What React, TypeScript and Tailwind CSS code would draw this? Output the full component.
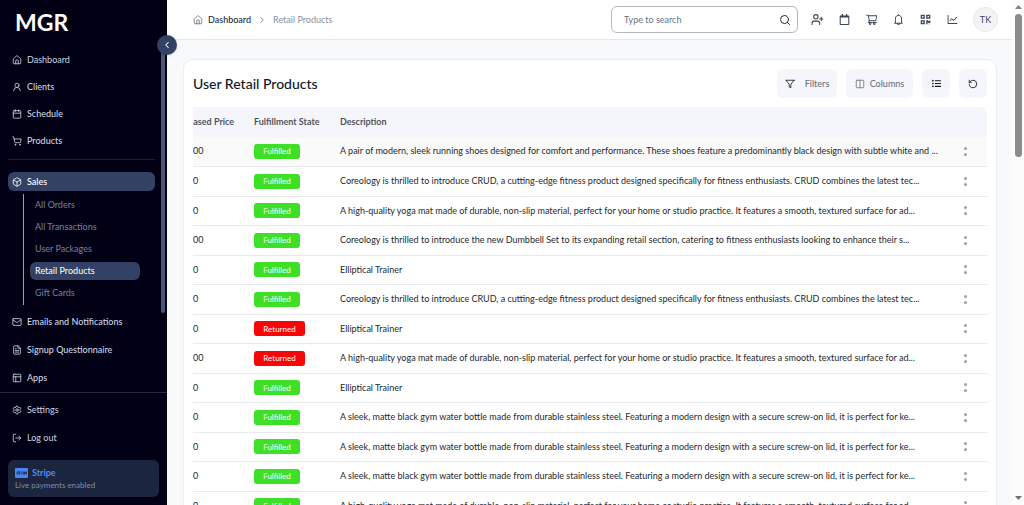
import React from "react";
import {
  Box, Calendar, ChevronLeft, ChevronRight, Columns2, FileText, House, LogOut, Mail,
  PanelsTopLeft, RotateCcw, Search, Settings, ShoppingCart, UserPlus, UserRound,
} from "lucide-react";
import { AiOutlineShoppingCart, AiOutlineBell, AiOutlineLineChart } from "react-icons/ai";
import { FaListUl, FaQrcode, FaRegCalendar } from "react-icons/fa";
import { FiFilter } from "react-icons/fi";

type Icon = React.ComponentType<{ size?: number; strokeWidth?: number; className?: string }>;

const mainLinks: { label: string; icon: Icon; strong: boolean }[] = [
  { label: "Dashboard", icon: House, strong: false },
  { label: "Clients", icon: UserRound, strong: true },
  { label: "Schedule", icon: Calendar, strong: true },
  { label: "Products", icon: ShoppingCart, strong: true },
];

const salesLinks = ["All Orders", "All Transactions", "User Packages", "Retail Products", "Gift Cards"];

const moreLinks: { label: string; icon: Icon; strong: boolean }[] = [
  { label: "Emails and Notifications", icon: Mail, strong: true },
  { label: "Signup Questionnaire", icon: FileText, strong: true },
  { label: "Apps", icon: PanelsTopLeft, strong: true },
];

const shoes = "A pair of modern, sleek running shoes designed for comfort and performance. These shoes feature a predominantly black design with subtle white and ...";
const crud = "Coreology is thrilled to introduce CRUD, a cutting-edge fitness product designed specifically for fitness enthusiasts. CRUD combines the latest tec...";
const yoga = "A high-quality yoga mat made of durable, non-slip material, perfect for your home or studio practice. It features a smooth, textured surface for ad...";
const dumbbell = "Coreology is thrilled to introduce the new Dumbbell Set to its expanding retail section, catering to fitness enthusiasts looking to enhance their s...";
const bottle = "A sleek, matte black gym water bottle made from durable stainless steel. Featuring a modern design with a secure screw-on lid, it is perfect for ke...";
const trainer = "Elliptical Trainer";

const rows: [string, "Fulfilled" | "Returned", string][] = [
  ["$120.00", "Fulfilled", shoes],
  ["$45.00", "Fulfilled", crud],
  ["$30.00", "Fulfilled", yoga],
  ["$150.00", "Fulfilled", dumbbell],
  ["$99.00", "Fulfilled", trainer],
  ["$45.00", "Fulfilled", crud],
  ["$99.00", "Returned", trainer],
  ["$130.00", "Returned", yoga],
  ["$99.00", "Fulfilled", trainer],
  ["$25.00", "Fulfilled", bottle],
  ["$25.00", "Fulfilled", bottle],
  ["$25.00", "Fulfilled", bottle],
  ["$30.00", "Fulfilled", yoga],
];

function NavLink({ label, icon: I, strong, tall }: { label: string; icon: Icon; strong: boolean; tall?: boolean }) {
  return (
    <a href="#" className={`flex items-center gap-[5px] pl-[4px] text-slate-300 ${tall ? "h-7" : "h-[27px]"} ${strong ? "font-medium" : ""}`}>
      <I size={10} strokeWidth={2} className="shrink-0" />
      <span>{label}</span>
    </a>
  );
}

function Sidebar() {
  return (
    <aside className="relative flex w-[167px] shrink-0 flex-col bg-[#020015] text-[9px] leading-4">
      <div className="h-[46px] pt-[6px] pl-[15px] text-[23px] leading-8 font-bold text-white">MGR</div>
      <button
        aria-label="Collapse sidebar"
        className="absolute top-[35px] -right-[10px] z-10 flex size-5 items-center justify-center rounded-full bg-[#334164] text-white shadow"
      >
        <ChevronLeft size={10} strokeWidth={2.5} />
      </button>
      <div className="flex min-h-0 flex-1 justify-between">
        <nav className="w-[155px] pl-2">
          {mainLinks.map((l) => <NavLink key={l.label} {...l} />)}
          <div className="mt-[5px] mb-3 border-t border-[#1c2035]" />
          <a href="#" className="flex h-[19px] items-center gap-[5px] rounded-md bg-[#334164] pl-[4px] font-medium text-white">
            <Box size={10} strokeWidth={2} className="shrink-0" />
            <span>Sales</span>
          </a>
          <div className="mt-[3px] mb-[3px] ml-[15px] flex flex-col gap-1 border-l border-slate-400 pt-[2px] pr-[15px] pb-[3px] pl-[6px]">
            {salesLinks.map((s) => (
              <a
                key={s}
                href="#"
                className={`flex h-[18px] items-center rounded-md pl-[5px] ${s === "Retail Products" ? "bg-[#334164] font-medium text-slate-100" : "text-[#75809c]"}`}
              >
                {s}
              </a>
            ))}
          </div>
          {moreLinks.map((l) => <NavLink key={l.label} {...l} tall />)}
        </nav>
        <div className="mr-[2px] h-[267px] w-1 shrink-0 rounded-b bg-[#475577]" />
      </div>
      <div className="border-t border-[#252a40] px-2 pt-[3px] pb-2">
        <NavLink label="Settings" icon={Settings} strong={false} tall />
        <NavLink label="Log out" icon={LogOut} strong={false} tall />
        <div className="mt-2 h-[37px] rounded-md bg-[#1c2540] px-[7px] pt-[7px]">
          <div className="flex items-center gap-1 leading-3 font-bold text-[#4b8bf5]">
            <span className="flex h-[10px] w-[13px] items-center justify-center rounded-[1px] bg-[#4b85f5]">
              <svg width="11" height="4" viewBox="0 0 22 8" fill="none" stroke="#1c2540" strokeWidth="1.6" aria-hidden="true">
                <path d="M4 2C1 1 1 4 3 4s2 3-2 2M6 0v6h2M5 2h3M10 7V2h2M14 2v5M14 0v1M16 8V2h2v4h-2M22 6h-2V2h2v2h-2" />
              </svg>
            </span>
            Stripe
          </div>
          <div className="text-[8px] leading-[12px] text-[#7f8ba6]">Live payments enabled</div>
        </div>
      </div>
    </aside>
  );
}

function Header() {
  return (
    <header className="flex h-10 shrink-0 items-center justify-between border-b border-gray-200 bg-white pr-[14px] pl-[26px]">
      <nav aria-label="Breadcrumb" className="flex items-center gap-[5px] text-[9px]">
        <House size={10} className="text-gray-500" />
        <a href="#" className="font-medium text-gray-800">Dashboard</a>
        <ChevronRight size={10} className="mx-[1px] text-gray-500" />
        <span className="text-[#8b90a0]">Retail Products</span>
      </nav>
      <div className="flex items-center text-[#3b4658]">
        <label className="mr-[13px] flex h-[27px] w-[187px] items-center rounded-md border border-[#b3b6be] pr-[6px] pl-3">
          <input aria-label="Search" placeholder="Type to search" className="min-w-0 flex-1 text-[9px] outline-none placeholder:text-gray-500" />
          <Search size={12} className="text-gray-800" />
        </label>
        <div className="flex items-center gap-[14px]">
          <button aria-label="Add client"><UserPlus size={13} /></button>
          <button aria-label="Calendar"><FaRegCalendar size={11} className="mx-[1px]" /></button>
          <button aria-label="Cart"><AiOutlineShoppingCart size={13} /></button>
          <button aria-label="Notifications"><AiOutlineBell size={13} /></button>
          <button aria-label="QR code"><FaQrcode size={11} className="mx-[1px]" /></button>
          <button aria-label="Reports"><AiOutlineLineChart size={13} /></button>
          <button className="size-[25px] rounded-full border border-gray-200 bg-gray-100 text-[9px]">TK</button>
        </div>
      </div>
    </header>
  );
}

function Products() {
  const button = "flex h-[29px] items-center justify-center rounded-md bg-[#f5f6fb] text-gray-500";
  return (
    <section className="mx-[15px] mt-[19px] ml-4 rounded-[10px] border border-[#ebedf1] bg-white px-[9px] pt-[9px]">
      <div className="mb-[9px] flex items-center justify-between">
        <h1 className="text-[14px] font-medium text-gray-900">User Retail Products</h1>
        <div className="flex gap-[9px] text-[9px] font-medium">
          <button className={`${button} w-[60px] gap-[10px]`}><FiFilter size={10} className="text-gray-900" />Filters</button>
          <button className={`${button} w-[67px] gap-[5px]`}><Columns2 size={10} />Columns</button>
          <button aria-label="List view" className={`${button} w-7`}><FaListUl size={9} className="text-gray-900" /></button>
          <button aria-label="Refresh" className={`${button} w-7`}><RotateCcw size={10} className="text-gray-900" /></button>
        </div>
      </div>
      <div className="flex justify-end overflow-hidden rounded-tr-md">
        <table className="w-[calc(100%+32px)] shrink-0 table-fixed text-left text-[9px] leading-4 text-[#25282e]">
          <thead>
            <tr className="h-[30px] bg-[#f5f6fb] text-[#50545e]">
              <th className="w-[84px] pl-[9px] font-bold whitespace-nowrap">Purchased Price</th>
              <th className="w-[87px] pl-[9px] font-bold whitespace-nowrap">Fulfillment State</th>
              <th className="pl-2 font-bold">Description</th>
              <th className="w-11" aria-label="Actions" />
            </tr>
          </thead>
          <tbody>
            {rows.map(([price, state, description], i) => (
              <tr key={i} className="h-[29px] border-b border-[#e8eaee] first:bg-[#fafafa] even:h-[30px]">
                <td className="pl-[9px]">{price}</td>
                <td className="pl-[9px]">
                  <span className={`flex h-[15px] items-center justify-center rounded-[3px] text-[8px] text-white ${state === "Returned" ? "w-[51px] bg-[#fa0507]" : "w-[46px] bg-[#3edf27]"}`}>
                    {state}
                  </span>
                </td>
                <td className="pl-2 whitespace-nowrap">{description}</td>
                <td>
                  <button aria-label="Row actions" className="mx-auto flex h-[15px] w-4 flex-col items-center justify-center gap-[3px]">
                    <span className="size-[3px] rounded-full bg-gray-400" />
                    <span className="size-[3px] rounded-full bg-gray-400" />
                  </button>
                </td>
              </tr>
            ))}
          </tbody>
        </table>
      </div>
    </section>
  );
}

export default function App() {
  return (
    <div className="flex h-screen overflow-hidden bg-white font-['Lato',sans-serif]">
      <Sidebar />
      <main className="min-w-0 flex-1 overflow-hidden bg-[#f8f9fb]">
        <Header />
        <Products />
      </main>
      <div className="flex w-3 shrink-0 flex-col items-center bg-[#fcfcfc] pt-[5px] pb-[5px]" aria-hidden="true">
        <svg width="7" height="4" viewBox="0 0 7 4" fill="#858585"><path d="M3.5 0 7 4H0z" /></svg>
        <div className="mt-[5px] h-[143px] w-[7px] rounded-full bg-[#8b8b8b]" />
        <svg className="mt-auto" width="7" height="4" viewBox="0 0 7 4" fill="#707070"><path d="M0 0h7L3.5 4z" /></svg>
      </div>
    </div>
  );
}
